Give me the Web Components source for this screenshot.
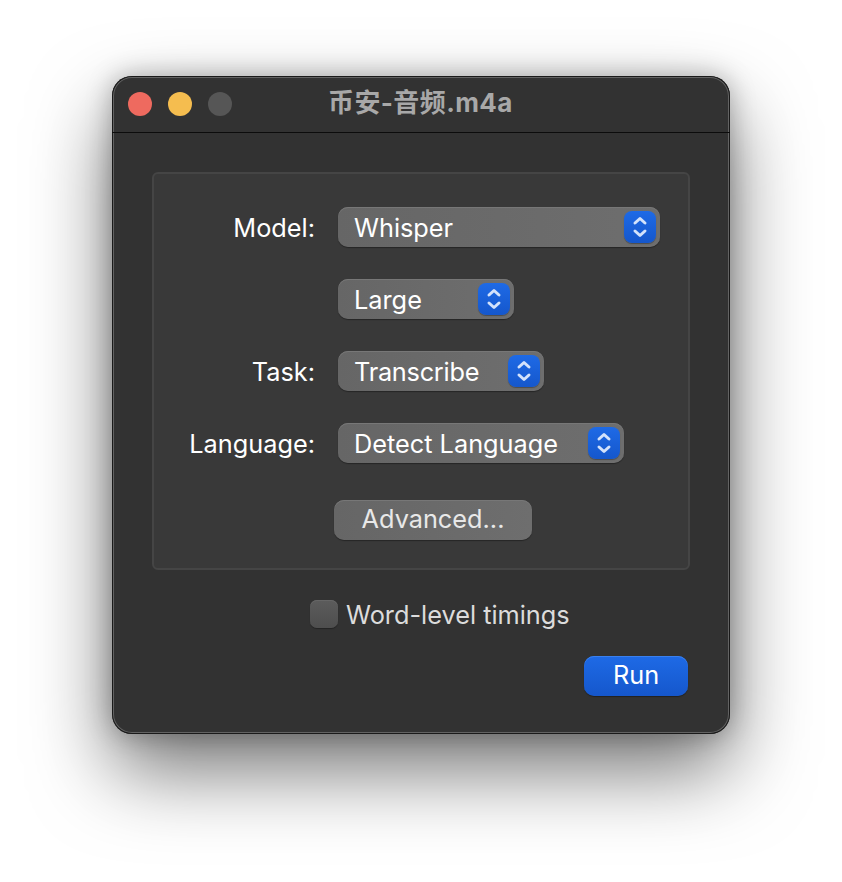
<!DOCTYPE html>
<html><head><meta charset="utf-8"><style>
html,body{margin:0;padding:0;background:#fff;height:100%;overflow:hidden}
body{font-family:Inter,"Noto Sans CJK SC",sans-serif;display:flex;justify-content:center;align-items:flex-start;padding-top:76px;box-sizing:border-box}
</style></head><body>
<mac-window title="币安-音频.m4a">
  <mac-group>
    <form-row label="Model:"><mac-select value="Whisper" width="322"></mac-select></form-row>
    <form-row><mac-select value="Large" width="176"></mac-select></form-row>
    <form-row label="Task:"><mac-select value="Transcribe" width="206" style="--ls:-.25px"></mac-select></form-row>
    <form-row label="Language:"><mac-select value="Detect Language" width="286"></mac-select></form-row>
    <mac-button slot="foot" width="198">Advanced...</mac-button>
  </mac-group>
  <mac-check>Word-level timings</mac-check>
  <mac-button primary width="104">Run</mac-button>
</mac-window>
<script>
const def=(name,html,init)=>customElements.define(name,class extends HTMLElement{
  connectedCallback(){ if(this.shadowRoot) return; const r=this.attachShadow({mode:'open'}); r.innerHTML=html; init&&init(this,r);} });
def('mac-window',`<style>
:host{display:flex;flex-direction:column;width:618px;height:658px;box-sizing:border-box;background:#323232;border-radius:20px;
 box-shadow:0 0 0 1px #1a1a1a inset,0 0 0 2px #626262 inset,0 36px 80px 0 rgba(0,0,0,.55),0 0 26px rgba(0,0,0,.28);color:#fff}
.bar{height:56px;flex:none;border-bottom:1px solid #0c0c0c;display:flex;align-items:center;padding-left:16px;position:relative}
.dot{width:24px;height:24px;border-radius:50%;margin-right:16px;flex:none}
.title{position:absolute;left:216px;top:12px;font:700 26px/30px Inter,"Noto Sans CJK SC",sans-serif;color:#a8a8a8;white-space:nowrap;letter-spacing:.4px}
.body{flex:1;display:flex;flex-direction:column;padding:39px 40px 38px}
</style><div class="bar"><span class="dot" style="background:#ee6a5f"></span><span class="dot" style="background:#f5bd4f"></span><span class="dot" style="background:#565656"></span><span class="title"></span></div>
<div class="body"><slot></slot></div>`,(h,r)=>{r.querySelector('.title').textContent=h.getAttribute('title');h.removeAttribute('title')});
def('mac-group',`<style>
:host{display:flex;flex-direction:column;height:398px;box-sizing:border-box;background:#393939;border:2px solid #454545;border-radius:6px;padding:33px 28px 0 0;gap:32px}
.foot{display:flex;justify-content:flex-start;padding-left:180px;margin-top:5px}
</style><slot></slot><div class="foot"><slot name="foot"></slot></div>`);
def('form-row',`<style>
:host{display:grid;grid-template-columns:161px auto;column-gap:23px;align-items:center;height:40px;font-size:25.3px}
.l{text-align:right;color:#fff;white-space:nowrap}
</style><span class="l"></span><div><slot></slot></div>`,(h,r)=>{r.querySelector('.l').textContent=h.getAttribute('label')||''});
def('mac-select',`<style>
:host{display:flex;align-items:center;height:40px;box-sizing:border-box;border-radius:10px;background:linear-gradient(90deg,#666,#6e6e6e);box-shadow:inset 0 1px 0 #777,0 1px 1px rgba(0,0,0,.35);padding:0 4px 0 16px;font-size:25.3px;color:#fff;justify-content:space-between}
.v{letter-spacing:var(--ls,0)}
.b{width:32px;height:32px;border-radius:8px;background:linear-gradient(#1e6ae6,#1557cc);display:flex;align-items:center;justify-content:center;box-shadow:0 1px 1px rgba(0,0,0,.3)}
svg{display:block}
</style><span class="v"></span><span class="b"><svg width="16" height="24" viewBox="0 0 16 24" fill="none" stroke="#d3e2fb" stroke-width="3" stroke-linecap="round" stroke-linejoin="round"><path d="M3 8 8 3.500 13 8M3 16 8 20.500 13 16"/></svg></span>`,(h,r)=>{r.querySelector('.v').textContent=h.getAttribute('value');h.style.width=h.getAttribute('width')+'px'});
def('mac-button',`<style>
:host{display:flex;align-items:center;justify-content:center;height:40px;box-sizing:border-box;border-radius:10px;font-size:25.3px;background:linear-gradient(90deg,#666,#6e6e6e);box-shadow:inset 0 1px 0 #777,0 1px 1px rgba(0,0,0,.35);color:#e8e8e8;padding-bottom:3px}
:host([primary]){background:linear-gradient(#1e6ae6,#1557cc);box-shadow:inset 0 1px 0 #3a80ee,0 1px 1px rgba(0,0,0,.35);color:#fff;align-self:flex-end;margin-top:27px;margin-right:2px;padding-bottom:3px}
</style><slot></slot>`,(h)=>{h.style.width=h.getAttribute('width')+'px'});
def('mac-check',`<style>
:host{display:flex;align-items:center;align-self:flex-start;margin:29px 0 0 158px;height:30px;gap:8px;font-size:25.3px;color:#dcdcdc}
.c{width:28px;height:28px;border-radius:7px;background:linear-gradient(#5c5c5c,#4e4e4e);box-shadow:inset 0 1px 0 #666,0 1px 1px rgba(0,0,0,.3);flex:none}
</style><span class="c"></span><slot></slot>`);
</script>
</body></html>
